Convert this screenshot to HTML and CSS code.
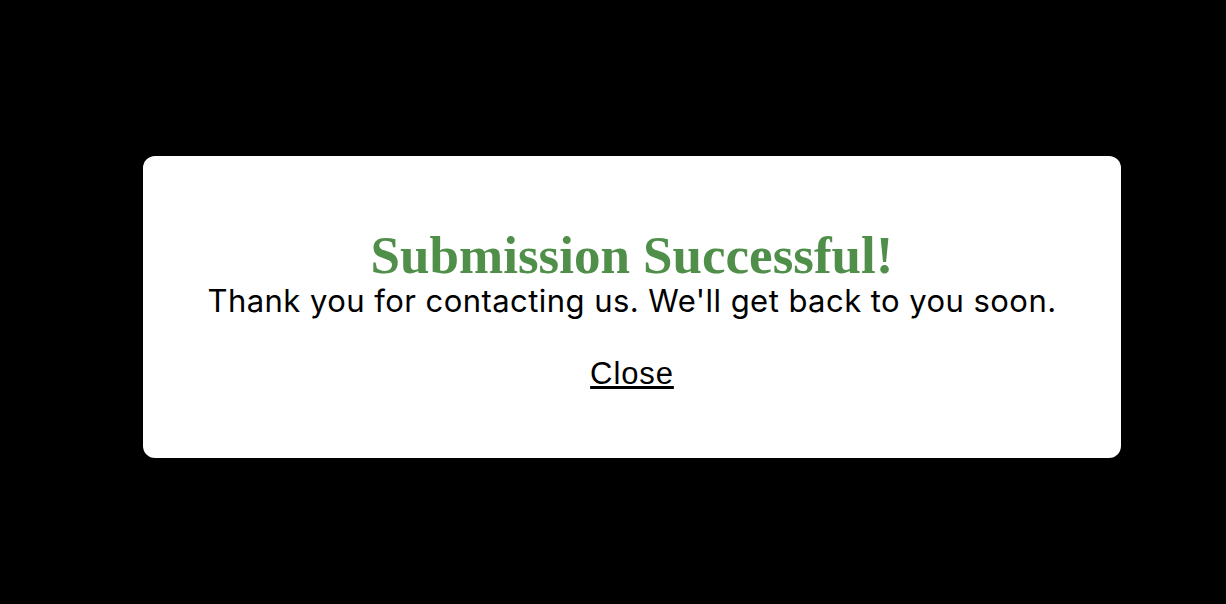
FILE: index.html
```html
<!DOCTYPE html>
<html lang="en">
<head>
<meta charset="utf-8">
<title>Submission Successful</title>
<link rel="stylesheet" href="styles.css">
</head>
<body>
<div class="modal">
  <h2 class="title">Submission Successful!</h2>
  <p class="message">Thank you for contacting us. We'll get back to you soon.</p>
  <a class="close" href="#">Close</a>
</div>
</body>
</html>
```
FILE: styles.css
```css
html, body {
  margin: 0;
  height: 100%;
  background: #000;
}
body {
  padding: 156px 0 0 143px;
  box-sizing: border-box;
}
.modal {
  width: 978px;
  height: 302px;
  box-sizing: border-box;
  background: #fff;
  border-radius: 12px;
  display: flex;
  flex-direction: column;
  align-items: center;
  padding-top: 71px;
}
.title {
  margin: 0;
  font-family: "Liberation Serif", "Times New Roman", serif;
  font-weight: 700;
  font-size: 53px;
  line-height: 56px;
  color: #508f4a;
}
.message {
  margin: 0;
  font-family: Inter, "Liberation Sans", sans-serif;
  font-size: 31px;
  line-height: 36px;
  letter-spacing: 0.45px;
  color: #000;
}
.close {
  margin-top: 37px;
  font-family: "Liberation Sans", Arial, sans-serif;
  font-size: 31px;
  line-height: 36px;
  letter-spacing: 0.9px;
  color: #000;
  text-decoration: underline;
}
```
